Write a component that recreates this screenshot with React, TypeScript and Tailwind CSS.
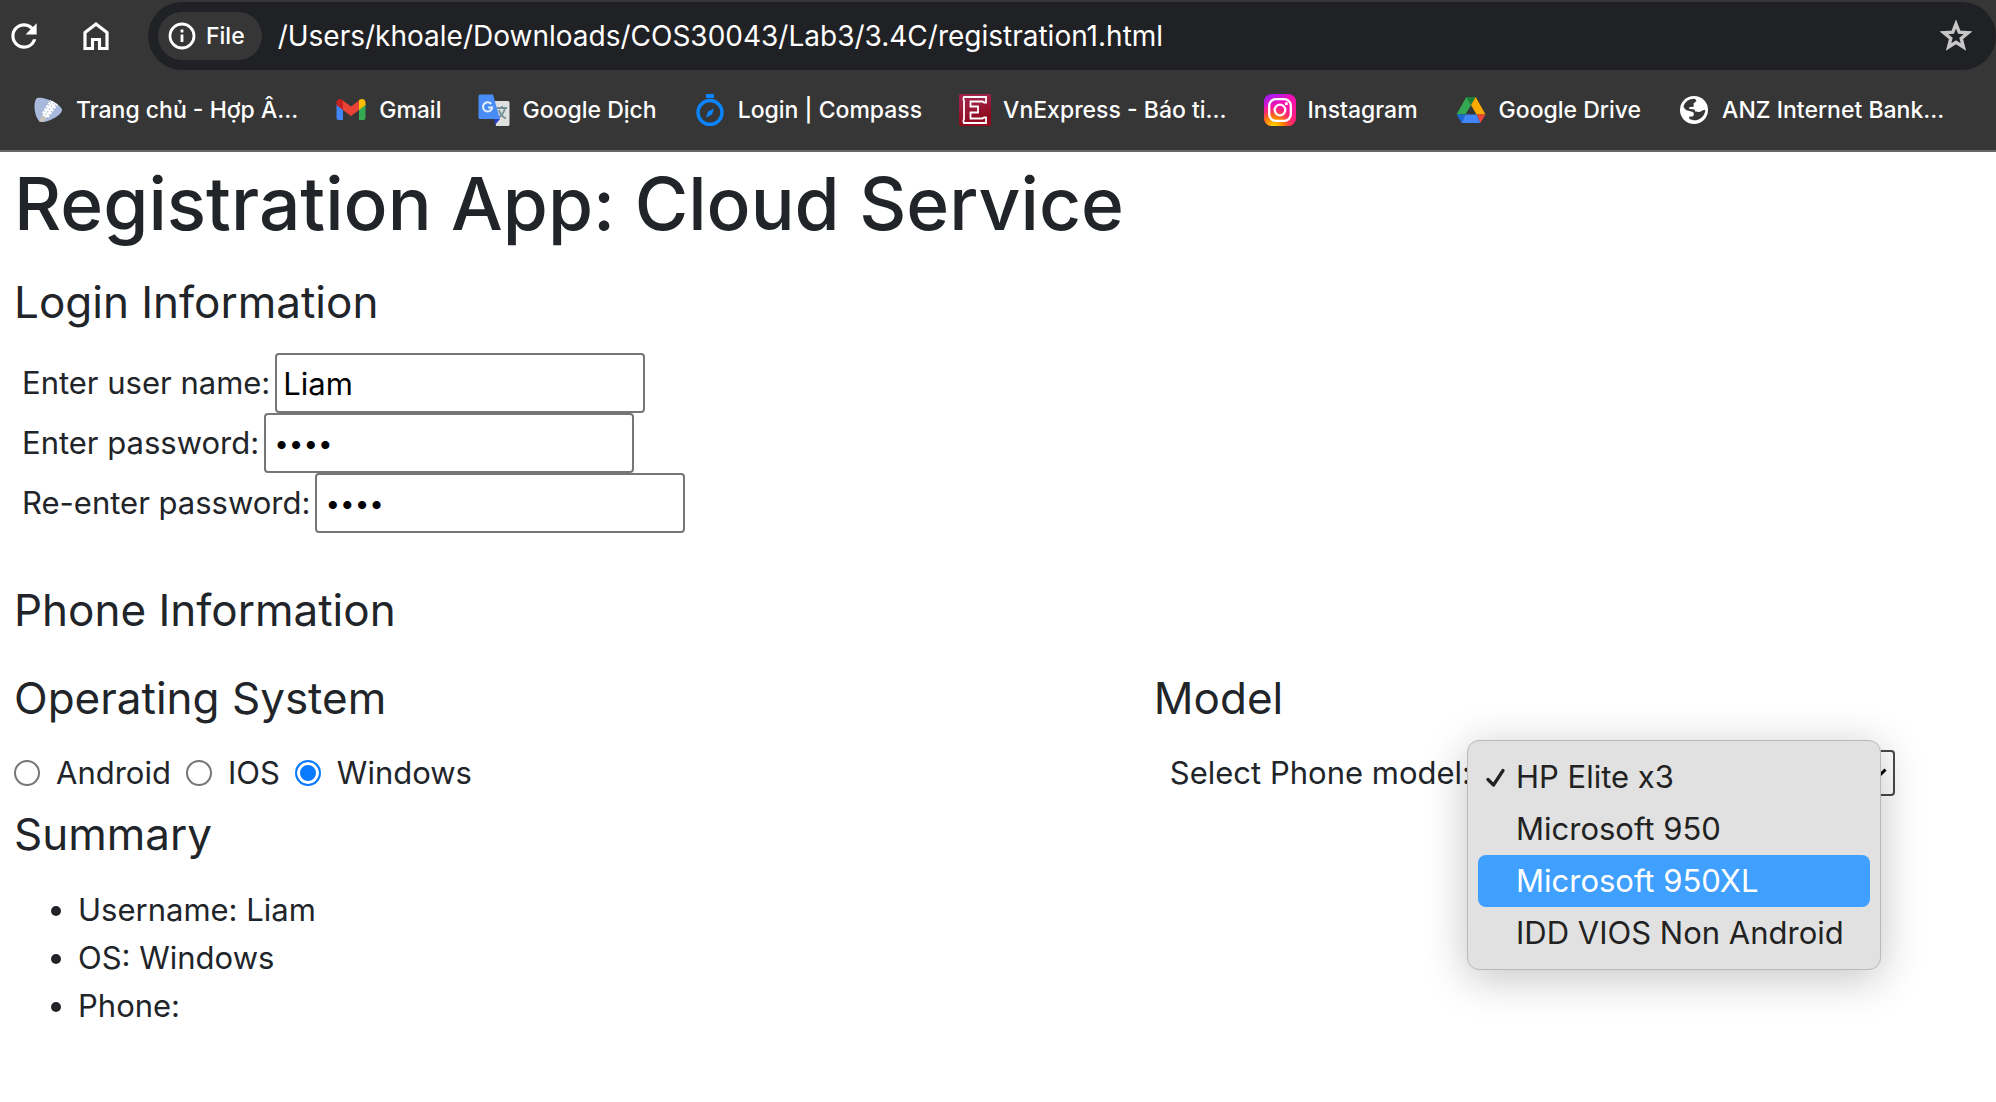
import { useState } from 'react';
import type { ReactNode } from 'react';
import { MdRefresh } from 'react-icons/md';

function HomeIcon() {
  return (
    <svg viewBox="0 0 26 30" className="h-[30px] w-[26px]" fill="none" stroke="#fff" strokeWidth="3.200">
      <path d="M2 27.500V11.500L13 3l11 8.500V27.500H16.500V18.500H9.500V27.500Z" />
    </svg>
  );
}

function InfoIcon() {
  return (
    <svg viewBox="0 0 28 28" className="size-7" fill="none" stroke="#fff" strokeWidth="2.800">
      <circle cx="14" cy="14" r="12" />
      <path d="M14 12.500V20M14 7.600V10.400" />
    </svg>
  );
}

function StarIcon() {
  return (
    <svg viewBox="0 0 32 32" className="size-8" fill="none" stroke="#c7c7c7" strokeWidth="3.400">
      <path d="M16 4l3.200 8.200 8.800.600-6.800 5.600 2.200 8.600L16 22.300 8.600 27l2.200-8.600L4 12.800l8.800-.600Z" />
    </svg>
  );
}

function PickIcon() {
  return (
    <svg viewBox="0 0 32 32" className="size-8">
      <path d="M5 4C12 2 29 10 30 15.500 31 20 18 28 10 28 3 28 0 8 5 4Z" fill="#a9b9dc" />
      <path d="M7 27.500l3.500-6.500 4 3-3.500 4Z" fill="#c9c5b8" />
      <path d="M11 19.500L19 6.500M15.500 23L25 10" stroke="#fff" strokeWidth="2.400" strokeDasharray="2.400 1.200" />
      <path d="M12.500 22.500L22 8" stroke="#fff" strokeWidth="4.600" />
      <path d="M13.500 21L21.500 8.800" stroke="#a9b9dc" strokeWidth="1.200" strokeDasharray="1.600 1.600" />
    </svg>
  );
}

function GmailIcon() {
  return (
    <svg viewBox="0 0 32 32" className="size-8">
      <path d="M1.500 10v14a2 2 0 0 0 2 2H8V13Z" fill="#4285f4" />
      <path d="M30.500 10v14a2 2 0 0 1-2 2H24V13Z" fill="#34a853" />
      <path d="M8 7.500v8.500L1.500 11V8.500C1.500 5.200 5 3.700 8 6Z" fill="#c5221f" />
      <path d="M24 7.500v8.500l6.500-5V8.500C30.500 5.200 27 3.700 24 6Z" fill="#fbbc04" />
      <path d="M8 16V6.500l8 6 8-6V16l-8 6Z" fill="#ea4335" />
    </svg>
  );
}

function TranslateIcon() {
  return (
    <svg viewBox="0 0 32 32" className="size-8">
      <path d="M13 7h17a1.500 1.500 0 0 1 1.500 1.500v22A1.500 1.500 0 0 1 30 32H18Z" fill="#dfe0e0" />
      <path d="M19 14h10M24 12v2M27 14c-1 5-4 8-7 10M21 16c1 4 4 7 7 8.500" stroke="#76909a" strokeWidth="1.800" fill="none" />
      <path d="M16 25h6l-5 6Z" fill="#2a3fc0" />
      <path d="M2 .5h13l7 24.500H2A1.500 1.500 0 0 1 .5 23.500V2A1.500 1.500 0 0 1 2 .5Z" fill="#4a8cf5" />
      <path d="M13.200 10A4.600 4.600 0 1 0 14.200 13.500H10.200" stroke="#e6effd" strokeWidth="2" fill="none" />
    </svg>
  );
}

function CompassIcon() {
  return (
    <svg viewBox="0 0 32 32" className="size-8">
      <rect x="12" y="0" width="8" height="4" fill="#0a84ff" />
      <circle cx="16" cy="18.500" r="12" fill="none" stroke="#0a84ff" strokeWidth="3.400" />
      <path d="M20 14.500l-2 6-6 3 2-6Z" fill="#0a84ff" />
    </svg>
  );
}

function VnExpressIcon() {
  return (
    <svg viewBox="0 0 32 32" className="size-8">
      <defs>
        <linearGradient id="vne" x1="0" y1="0" x2="0.300" y2="1">
          <stop offset="0.300" stopColor="#9f2246" />
          <stop offset="0.900" stopColor="#8e0a1c" />
        </linearGradient>
      </defs>
      <rect width="32" height="32" rx="1.500" fill="url(#vne)" />
      <path d="M5 3H27V8.500H25L23.500 7.500H11.500V12.500H19V18.500H11.500V24.500H23.500L25 23.500H27V29H5L4.500 28V26L5 25.500V6.500L4.500 6V4Z" fill="none" stroke="#fff" strokeWidth="1.800" />
    </svg>
  );
}

function InstagramIcon() {
  return (
    <svg viewBox="0 0 32 32" className="size-8">
      <defs>
        <linearGradient id="igBase" x1="0.200" y1="0" x2="0.700" y2="1">
          <stop offset="0" stopColor="#a01cf5" />
          <stop offset="0.350" stopColor="#f50fb4" />
          <stop offset="1" stopColor="#ff1f77" />
        </linearGradient>
        <radialGradient id="igWarm" cx="0.300" cy="1.050" r="0.750">
          <stop offset="0.100" stopColor="#ffd000" />
          <stop offset="0.450" stopColor="#ff7a00" />
          <stop offset="1" stopColor="#ff1f77" stopOpacity="0" />
        </radialGradient>
      </defs>
      <rect width="32" height="32" rx="7.500" fill="url(#igBase)" />
      <rect width="32" height="32" rx="7.500" fill="url(#igWarm)" />
      <g fill="none" stroke="#fff" strokeWidth="2.300">
        <rect x="5.200" y="5.200" width="21.600" height="21.600" rx="6.500" />
        <circle cx="16" cy="16" r="5.300" />
      </g>
      <circle cx="22.400" cy="9.700" r="1.600" fill="#fff" />
    </svg>
  );
}

function DriveIcon() {
  return (
    <svg viewBox="0 0 32 32" className="size-8">
      <path d="M11.300 3h9.400L16 11Z" fill="#188038" />
      <path d="M11.300 3L16 11l-5.500 9.500h-9Z" fill="#34a853" />
      <path d="M20.700 3L16 11l5.500 9.500h9Z" fill="#fbab00" />
      <path d="M1.500 20.500h9L6.500 29Z" fill="#1967d2" />
      <path d="M30.500 20.500h-9l4 8.500Z" fill="#ea4335" />
      <path d="M10.500 20.500h11l4 8.500h-19Z" fill="#4285f4" />
    </svg>
  );
}

function GlobeIcon() {
  return (
    <svg viewBox="0 0 32 32" className="size-8">
      <circle cx="16" cy="16" r="14" fill="#fff" />
      <path d="M5.500 12.500C7 7.500 11 4.600 17 4.800L18.500 7l-3 2.500.3 3.300-4.300.2-.3 2 3.800.2c1.300.1 2 .6 2.200 2.200l4.300.6c2-.4 2.200-2 5.800-2.300-.3 6-5.200 10.800-11.500 10.600l-4.500-1.200v-2.600h3.400c1.300-.6 1.500-3.500.3-4.500L9.500 16.500c-1.500-.2-3-1.500-4-4Z" fill="#363636" />
    </svg>
  );
}

const bookmarks: { icon: ReactNode; label: string }[] = [
  { icon: <PickIcon />, label: 'Trang chủ - Hợp Â...' },
  { icon: <GmailIcon />, label: 'Gmail' },
  { icon: <TranslateIcon />, label: 'Google Dịch' },
  { icon: <CompassIcon />, label: 'Login | Compass' },
  { icon: <VnExpressIcon />, label: 'VnExpress - Báo ti...' },
  { icon: <InstagramIcon />, label: 'Instagram' },
  { icon: <DriveIcon />, label: 'Google Drive' },
  { icon: <GlobeIcon />, label: 'ANZ Internet Bank...' },
];

function BrowserBar() {
  return (
    <header className="border-b-2 border-[#676565] bg-[#363636] text-white">
      <div className="flex items-center pt-0.5">
        <button aria-label="Reload" className="ml-[5px]">
          <MdRefresh className="size-[38px]" />
        </button>
        <button aria-label="Home" className="ml-10">
          <HomeIcon />
        </button>
        <div className="ml-[39px] flex h-[68px] flex-1 items-center rounded-full bg-[#202124] pr-6 pl-2.5">
          <button className="flex h-12 items-center gap-2.5 rounded-full bg-[#363636] pr-[17px] pl-2.5 text-[23px] font-medium">
            <InfoIcon />
            File
          </button>
          <input
            aria-label="Address"
            className="ml-4 min-w-0 flex-1 bg-transparent text-[28px] outline-none"
            defaultValue="/Users/khoale/Downloads/COS30043/Lab3/3.4C/registration1.html"
          />
          <button aria-label="Bookmark this page">
            <StarIcon />
          </button>
        </div>
      </div>
      <nav className="flex h-20 items-center gap-[37px] overflow-hidden pl-8">
        {bookmarks.map((b) => (
          <a key={b.label} href="#" className="flex shrink-0 items-center gap-3 text-[23px] font-medium whitespace-nowrap">
            {b.icon}
            {b.label}
          </a>
        ))}
      </nav>
    </header>
  );
}

function Field({ id, label, type, value, onChange }: { id: string; label: string; type: string; value: string; onChange: (v: string) => void }) {
  return (
    <div className="flex h-[60px] items-center gap-[5px] pl-2">
      <label htmlFor={id}>{label}</label>
      <input
        id={id}
        type={type}
        value={value}
        onChange={(e) => onChange(e.target.value)}
        className={
          type === 'password'
            ? 'h-[60px] w-[370px] rounded-[4px] border-2 border-[#767676] bg-white px-2 text-[26px] text-black'
            : 'h-[60px] w-[370px] rounded-[4px] border-2 border-[#767676] bg-white px-1.5 text-black'
        }
      />
    </div>
  );
}

function Heading({ children }: { children: ReactNode }) {
  return <h3 className="text-[44px] leading-[68px]">{children}</h3>;
}

const systems = ['Android', 'IOS', 'Windows'];
const models = ['HP Elite x3', 'Microsoft 950', 'Microsoft 950XL', 'IDD VIOS Non Android'];

export default function App() {
  const [name, setName] = useState('Liam');
  const [password, setPassword] = useState('pass');
  const [repeat, setRepeat] = useState('pass');
  const [os, setOs] = useState('Windows');
  const [model, setModel] = useState(models[0]);

  return (
    <div className="min-h-screen bg-white font-[Inter,sans-serif] text-[31px] leading-[48px] text-[#212529]">
      <BrowserBar />
      <main className="pt-1 pr-7 pl-3.5">
        <h1 className="mb-4 text-[73px] leading-[96px] font-medium">Registration App: Cloud Service</h1>
        <Heading>Login Information</Heading>
        <form className="mt-[17px] mb-[43px]">
          <Field id="user" label="Enter user name:" type="text" value={name} onChange={setName} />
          <Field id="password" label="Enter password:" type="password" value={password} onChange={setPassword} />
          <Field id="repeat" label="Re-enter password:" type="password" value={repeat} onChange={setRepeat} />
        </form>

        <Heading>Phone Information</Heading>
        <div className="mt-5 grid grid-cols-12">
          <section className="col-span-7">
            <Heading>Operating System</Heading>
            <div className="mt-[17px] flex gap-[15px]">
              {systems.map((s) => (
                <label key={s} className="flex items-center gap-4">
                  <input
                    type="radio"
                    name="os"
                    checked={os === s}
                    onChange={() => setOs(s)}
                    className="size-[26px] appearance-none rounded-full border-2 border-[#767676] bg-white checked:border-[#0a7aff] checked:bg-[#0a7aff] checked:shadow-[inset_0_0_0_3px_white]"
                  />
                  {s}
                </label>
              ))}
            </div>
          </section>
          <section className="col-span-5">
            <Heading>Model</Heading>
            <div className="mt-[17px] flex items-center pl-4">
              <label htmlFor="model" className="whitespace-nowrap">Select Phone model:</label>
              <div className="relative">
                <select
                  id="model"
                  value={model}
                  onChange={(e) => setModel(e.target.value)}
                  className="block h-[46px] w-[424px] appearance-none rounded-[4px] border-2 border-[#4a4a4a] bg-white px-2 leading-8 text-black"
                >
                  {models.map((m) => (
                    <option key={m}>{m}</option>
                  ))}
                </select>
                <svg viewBox="0 0 18 12" className="pointer-events-none absolute top-[18px] right-2 h-3 w-[18px]" fill="none" stroke="#000" strokeWidth="3">
                  <path d="M1.500 1.500L9 9l7.500-7.500" />
                </svg>
                <ul
                  role="listbox"
                  aria-label="Phone models"
                  className="absolute -top-2.5 -left-1 z-10 w-[414px] rounded-xl border border-[#b9b9b9] bg-[#e1e1e1] p-2.5 text-[#222] shadow-[0_8px_44px_rgba(0,0,0,0.24)]"
                >
                  {models.map((m) => (
                    <li
                      key={m}
                      role="option"
                      aria-selected={m === model}
                      className={
                        m === 'Microsoft 950XL'
                          ? 'flex h-[52px] items-center rounded-lg bg-[#40a0ff] pl-2 text-white'
                          : 'flex h-[52px] items-center rounded-lg pl-2'
                      }
                    >
                      <span className="w-[30px] shrink-0">
                        {m === model && (
                          <svg viewBox="0 0 20 20" className="size-5" fill="none" stroke="#222" strokeWidth="3.200" strokeLinecap="round" strokeLinejoin="round">
                            <path d="M2 12.500l5.500 5.500L17 3.500" />
                          </svg>
                        )}
                      </span>
                      {m}
                    </li>
                  ))}
                </ul>
              </div>
            </div>
          </section>
        </div>

        <section className="mt-[3px]">
          <Heading>Summary</Heading>
          <ul className="mt-[18px] list-disc pl-16">
            <li>Username: {name}</li>
            <li>OS: {os}</li>
            <li>Phone:</li>
          </ul>
        </section>
      </main>
    </div>
  );
}
